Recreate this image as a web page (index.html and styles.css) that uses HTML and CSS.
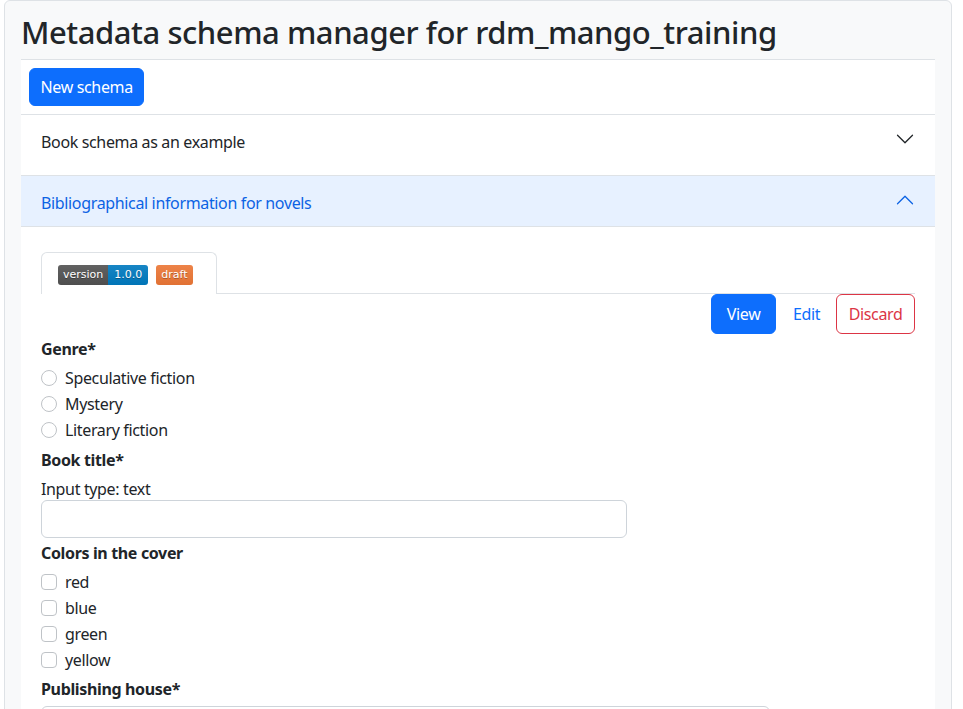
FILE: index.html
```html
<!DOCTYPE html>
<html lang="en">
<head>
<meta charset="utf-8">
<title>Metadata schema manager</title>
<link rel="stylesheet" href="styles.css">
</head>
<body>
<div class="app">
  <h1 class="title">Metadata schema manager for rdm_mango_training</h1>
  <div class="toolbar">
    <button class="btn btn-primary btn-new">New schema</button>
  </div>
  <div class="accordion">
    <div class="acc-item">
      <div class="acc-header first">
        <span>Book schema as an example</span>
        <svg class="chev" viewBox="0 0 16 16" width="20" height="20"><path fill="#212529" fill-rule="evenodd" d="M1.646 4.646a.5.5 0 0 1 .708 0L8 10.293l5.646-5.647a.5.5 0 0 1 .708.708l-6 6a.5.5 0 0 1-.708 0l-6-6a.5.5 0 0 1 0-.708z"/></svg>
      </div>
    </div>
    <div class="acc-item">
      <div class="acc-header active">
        <span>Bibliographical information for novels</span>
        <svg class="chev up" viewBox="0 0 16 16" width="20" height="20"><path fill="#0c63e4" fill-rule="evenodd" d="M1.646 4.646a.5.5 0 0 1 .708 0L8 10.293l5.646-5.647a.5.5 0 0 1 .708.708l-6 6a.5.5 0 0 1-.708 0l-6-6a.5.5 0 0 1 0-.708z"/></svg>
      </div>
      <div class="acc-body">
        <div class="tabs">
          <div class="tab">
            <span class="shield"><span class="s-label">version</span><span class="s-value">1.0.0</span></span>
            <span class="shield"><span class="s-draft">draft</span></span>
          </div>
        </div>
        <div class="actions">
          <button class="btn btn-primary btn-view">View</button>
          <button class="btn btn-link">Edit</button>
          <button class="btn btn-outline-danger">Discard</button>
        </div>
        <form class="form">
          <div class="field f-genre">
            <div class="field-label">Genre*</div>
            <label class="opt"><span class="radio"></span>Speculative fiction</label>
            <label class="opt"><span class="radio"></span>Mystery</label>
            <label class="opt"><span class="radio"></span>Literary fiction</label>
          </div>
          <div class="field f-title">
            <div class="field-label">Book title*</div>
            <div class="help">Input type: text</div>
            <div class="input w-title"></div>
          </div>
          <div class="field f-colors">
            <div class="field-label">Colors in the cover</div>
            <label class="opt"><span class="check"></span>red</label>
            <label class="opt"><span class="check"></span>blue</label>
            <label class="opt"><span class="check"></span>green</label>
            <label class="opt"><span class="check"></span>yellow</label>
          </div>
          <div class="field f-pub">
            <div class="field-label">Publishing house*</div>
            <div class="input w-pub"></div>
          </div>
        </form>
      </div>
    </div>
  </div>
</div>
</body>
</html>
```

FILE: styles.css
```css
html, body {
  margin: 0;
  padding: 0;
  background: #fff;
  overflow: hidden;
}
body {
  font-family: "Noto Sans", "Open Sans", sans-serif;
  font-size: 16px;
  line-height: 24px;
  letter-spacing: -0.35px;
  color: #212529;
}
.app {
  margin-left: 4px;
  width: 914px;
  padding: 0 16px 40px;
  background: #f8f9fa;
  border: 1px solid #dee2e6;
  border-radius: 6px 6px 0 0;
  min-height: 800px;
}
.title {
  margin: 0;
  padding: 12px 0 7px;
  font-size: 31px;
  line-height: 39px;
  letter-spacing: -0.45px;
  font-weight: 500;
  color: #212529;
}
.toolbar {
  background: #fff;
  border-top: 1px solid #dee2e6;
  border-bottom: 1px solid #dee2e6;
  padding: 8px;
}
.btn {
  font-family: inherit;
  font-size: 16px;
  line-height: 24px;
  letter-spacing: -0.35px;
  padding: 6px 12px;
  border: 1px solid transparent;
  border-radius: 6px;
  background: transparent;
  cursor: pointer;
  display: inline-block;
}
.btn-primary {
  background: #0d6efd;
  border-color: #0d6efd;
  color: #fff;
}
.btn-new {
  padding: 6px 10.5px;
}
.btn-view {
  padding: 7px 14.5px;
}
.btn-link {
  color: #0d6efd;
  padding: 7px 12px;
}
.btn-outline-danger {
  color: #dc3545;
  border-color: #dc3545;
  padding: 7px 11.5px;
}
.accordion {
  background: #fff;
}
.acc-item {
  border-bottom: 1px solid #dee2e6;
}
.acc-item:last-child {
  border-bottom: 0;
}
.acc-header {
  display: flex;
  align-items: center;
  justify-content: space-between;
  padding: 15px 20px 21px;
  font-size: 16px;
  line-height: 24px;
  color: #212529;
}
.acc-header.active {
  background: #e7f1ff;
  color: #0c63e4;
  padding: 15px 20px 11px;
  border-bottom: 1px solid #dee2e6;
}
.chev {
  display: block;
  flex: none;
  margin-top: -6px;
}
.chev.up {
  transform: rotate(180deg);
}
.acc-body {
  padding: 25px 20px 20px;
}
.tabs {
  display: flex;
  border-bottom: 1px solid #dee2e6;
}
.tab {
  display: flex;
  align-items: center;
  gap: 8px;
  height: 41px;
  padding: 0 16px;
  border: 1px solid #dee2e6;
  border-bottom: 0;
  border-radius: 6px 6px 0 0;
  margin-bottom: -1px;
  background: #fff;
  width: 142px;
}
.shield {
  display: inline-flex;
  height: 20px;
  border-radius: 3px;
  overflow: hidden;
  font-family: "DejaVu Sans", Verdana, sans-serif;
  font-size: 11px;
  letter-spacing: 0;
  line-height: 20px;
  color: #fff;
  text-shadow: 0 1px 0 rgba(1, 1, 1, 0.3);
  margin-top: 2px;
}
.shield span {
  padding: 0 5px;
  background-image: linear-gradient(rgba(187, 187, 187, 0.12), rgba(0, 0, 0, 0.08));
}
.s-label {
  background-color: #555;
}
.s-value {
  background-color: #007ec6;
}
.shield .s-value {
  padding: 0 6px;
}
.s-draft {
  background-color: #f47b38;
}
.actions {
  display: flex;
  justify-content: flex-end;
}
.actions .btn-link {
  margin: 0 3px 0 4px;
}
.form {
  margin-top: 3px;
}
.field-label {
  font-weight: 700;
  margin-bottom: 4px;
}
.f-genre {
  margin-bottom: 5px;
}
.f-title {
  margin-bottom: 3px;
}
.f-colors {
  margin-bottom: 4px;
}
.f-pub .field-label {
  margin-bottom: 5px;
}
.opt {
  display: flex;
  align-items: center;
  height: 26px;
}
.radio, .check {
  display: inline-block;
  width: 14px;
  height: 14px;
  border: 1px solid #bfc3c7;
  margin-right: 8px;
  background: #fff;
  flex: none;
}
.radio {
  border-radius: 50%;
}
.check {
  border-radius: 4px;
}
.help {
  line-height: 22px;
  margin-top: 6px;
}
.input {
  height: 36px;
  border: 1px solid #ced4da;
  border-radius: 6px;
  background: #fff;
}
.w-title {
  width: 584px;
}
.w-pub {
  width: 727px;
}
```
